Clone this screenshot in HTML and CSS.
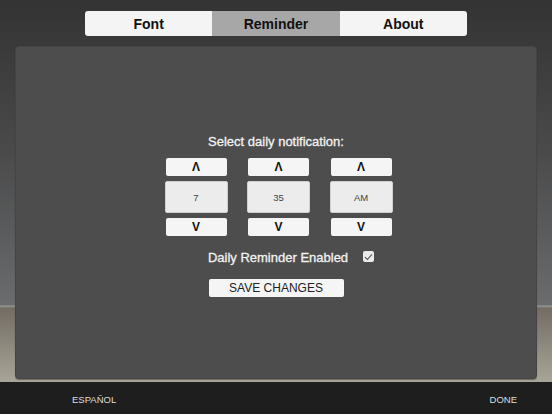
FILE: index.html
```html
<!DOCTYPE html>
<html lang="en">
<head>
<meta charset="utf-8">
<title>Settings</title>
<link rel="stylesheet" href="styles.css">
</head>
<body>
<div class="screen">
  <nav class="tabs">
    <div class="tab">Font</div>
    <div class="tab active">Reminder</div>
    <div class="tab">About</div>
  </nav>
  <section class="panel">
    <div class="title">Select daily notification:</div>
    <div class="picker">
      <div class="col">
        <button class="step">&#923;</button>
        <div class="value">7</div>
        <button class="step">V</button>
      </div>
      <div class="col">
        <button class="step">&#923;</button>
        <div class="value">35</div>
        <button class="step">V</button>
      </div>
      <div class="col">
        <button class="step">&#923;</button>
        <div class="value">AM</div>
        <button class="step">V</button>
      </div>
    </div>
    <div class="enabled">
      <span class="label">Daily Reminder Enabled</span>
      <span class="check">
        <svg width="9" height="8" viewBox="0 0 9 8"><path d="M1 4.2 L3.4 6.5 L8 1.3" fill="none" stroke="#555" stroke-width="1.1"/></svg>
      </span>
    </div>
    <button class="save">SAVE CHANGES</button>
  </section>
</div>
<footer class="bottombar">
  <span class="link">ESPAÑOL</span>
  <span class="link">DONE</span>
</footer>
</body>
</html>
```

FILE: styles.css
```css
html, body {
  margin: 0;
  padding: 0;
}
body {
  width: 552px;
  height: 414px;
  overflow: hidden;
  font-family: "Liberation Sans", Arial, sans-serif;
  background: #1e1e1e;
}
.screen {
  height: 382px;
  display: flex;
  flex-direction: column;
  align-items: center;
  padding-top: 11px;
  box-sizing: border-box;
  background: linear-gradient(to bottom,
    #333333 0px,
    #3a3a3a 45px,
    #4a4a4b 150px,
    #5c5d5e 240px,
    #6b6c6e 305px,
    #9a9a98 306px,
    #736c63 308px,
    #8a857a 340px,
    #a8a698 382px);
}
.tabs {
  display: flex;
  width: 382px;
  height: 25px;
  border-radius: 3px;
  overflow: hidden;
  background: #f4f4f4;
}
.tab {
  flex: 1;
  display: flex;
  align-items: center;
  justify-content: center;
  font-size: 14px;
  font-weight: bold;
  color: #111;
}
.tab.active {
  background: #a7a7a7;
}
.panel {
  box-sizing: border-box;
  width: 522px;
  height: 333px;
  margin-top: 10px;
  background: #4d4d4d;
  border: 1px solid #454545;
  border-radius: 4px;
  box-shadow: 0 1px 1px rgba(0,0,0,0.35);
  display: flex;
  flex-direction: column;
  align-items: center;
  padding-top: 87px;
}
.title {
  font-size: 13px;
  line-height: 16px;
  color: #f2f2f2;
  -webkit-text-stroke: 0.3px #f2f2f2;
}
.picker {
  display: flex;
  gap: 19.5px;
  margin-top: 8px;
  margin-left: 5px;
}
.col {
  width: 63px;
  display: flex;
  flex-direction: column;
  align-items: center;
  gap: 5px;
}
.step {
  width: 61px;
  height: 18px;
  margin: 0;
  padding: 0;
  border: none;
  border-radius: 2px;
  background: #f5f5f5;
  font-family: "Liberation Sans", Arial, sans-serif;
  font-weight: bold;
  font-size: 12px;
  line-height: 18px;
  color: #111;
}
.value {
  box-sizing: border-box;
  width: 63px;
  height: 32px;
  background: #ececec;
  border: 1px solid #cfcfcf;
  border-radius: 2px;
  display: flex;
  align-items: center;
  justify-content: center;
  font-size: 9.5px;
  color: #444;
}
.enabled {
  display: flex;
  align-items: center;
  margin-top: 13px;
  padding-left: 30px;
  height: 16px;
}
.label {
  font-size: 13px;
  color: #f2f2f2;
  -webkit-text-stroke: 0.3px #f2f2f2;
}
.check {
  box-sizing: border-box;
  width: 11px;
  height: 11px;
  margin-left: 15px;
  margin-top: -1px;
  background: #ececec;
  border-radius: 2px;
  display: flex;
  align-items: center;
  justify-content: center;
}
.save {
  margin: 14px 0 0;
  width: 135px;
  height: 18px;
  padding: 0;
  border: none;
  border-radius: 2px;
  background: #f5f5f5;
  font-family: "Liberation Sans", Arial, sans-serif;
  font-size: 12px;
  line-height: 18px;
  color: #222;
}
.bottombar {
  height: 32px;
  display: flex;
  align-items: center;
  justify-content: space-between;
  padding: 2px 35px 0 72px;
  box-sizing: border-box;
  background: #1e1e1e;
}
.link {
  font-size: 9.5px;
  color: #dedede;
}
```
